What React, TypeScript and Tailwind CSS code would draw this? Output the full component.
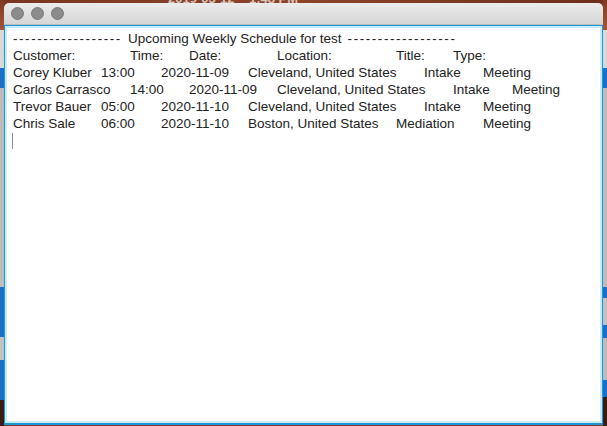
import React from "react";

type Cell = [string, number];

const rows: Cell[][] = [
  [["Customer:", 117], ["Time:", 59], ["Date:", 88], ["Location:", 119], ["Title:", 57], ["Type:", 0]],
  [["Corey Kluber", 88], ["13:00", 60], ["2020-11-09", 87], ["Cleveland, United States", 176], ["Intake", 59], ["Meeting", 0]],
  [["Carlos Carrasco", 117], ["14:00", 59], ["2020-11-09", 88], ["Cleveland, United States", 176], ["Intake", 59], ["Meeting", 0]],
  [["Trevor Bauer", 88], ["05:00", 60], ["2020-11-10", 87], ["Cleveland, United States", 176], ["Intake", 59], ["Meeting", 0]],
  [["Chris Sale", 88], ["06:00", 60], ["2020-11-10", 87], ["Boston, United States", 148], ["Mediation", 87], ["Meeting", 0]],
];

const dashes = "------------------";

function Line({ cells }: { cells: Cell[] }) {
  return (
    <div className="flex whitespace-pre">
      {cells.map(([text, w], i) => (
        <span
          key={i}
          className="shrink-0"
          style={w ? { width: w } : undefined}
        >
          {text}
        </span>
      ))}
    </div>
  );
}

function SideStrip({ right }: { right?: boolean }) {
  return (
    <div className="flex flex-col w-[4px] shrink-0 h-full">
      <div className="h-[30px] bg-gradient-to-b from-[#7e3a22] to-[#a5563a]" />
      <div className="h-[38px] bg-[#d8d8d8]" />
      <div className="h-[20px] bg-[#1a6fc9]" />
      <div className="h-[199px] bg-[#bdbdbd]" />
      <div className={right ? "h-[11px] bg-[#1a6fc9]" : "h-[50px] bg-[#1a6fc9]"} />
      <div className={right ? "h-[27px] bg-[#c2c2c2]" : "h-[23px] bg-[#c2c2c2]"} />
      <div className={right ? "h-[13px] bg-[#1a6fc9]" : "h-[0px]"} />
      <div className={right ? "h-[42px] bg-[#bcbcbc]" : "h-[0px]"} />
      <div className={right ? "h-[17px] bg-[#1a6fc9]" : "h-[40px] bg-[#1a6fc9]"} />
      <div className="flex-1 bg-[#3b1c12]" />
    </div>
  );
}

export default function App() {
  return (
    <div className="w-[607px] h-[426px] overflow-hidden flex bg-[#7a3620] font-['Liberation_Sans',Arial,sans-serif]">
      <SideStrip />

      <div className="w-[599px] shrink-0 flex flex-col">
        {/* desktop menu bar peeking above the window */}
        <div className="h-[3px] overflow-hidden bg-gradient-to-r from-[#7a3620] via-[#8c4429] to-[#6e2f1b] relative">
          <span className="absolute left-[164px] top-[-11px] text-[13px] font-bold text-[#d9c2b8] whitespace-pre">
            2019-03-12    1:48 PM
          </span>
        </div>

        {/* window */}
        <div className="flex-1 flex flex-col rounded-t-[5px] overflow-hidden mb-[1px]">
          {/* title bar */}
          <div className="h-[22px] shrink-0 flex items-center gap-[7px] pl-[7px] bg-gradient-to-b from-[#ececec] to-[#d6d6d6] border-b border-[#bdbdbd]">
            <span className="w-[13px] h-[13px] rounded-full bg-[#8b8b8b] border border-[#7a7a7a]" />
            <span className="w-[13px] h-[13px] rounded-full bg-[#8b8b8b] border border-[#7a7a7a]" />
            <span className="w-[13px] h-[13px] rounded-full bg-[#8b8b8b] border border-[#7a7a7a]" />
          </div>

          {/* text area with focus ring */}
          <div className="flex-1 border border-[#1d97dc] border-b-2 flex">
            <div className="flex-1 border-2 border-[#c9ecfb] bg-white pl-[6px] pt-[2px] text-[13.5px] leading-[17px] text-[#222]">
              <div className="flex whitespace-pre">
                <span className="w-[115px] shrink-0 tracking-[1.55px] overflow-hidden">
                  {dashes}
                </span>
                <span>Upcoming Weekly Schedule for test</span>
                <span className="ml-[6px] tracking-[1.55px]">{dashes}</span>
              </div>
              {rows.map((cells, i) => (
                <Line key={i} cells={cells} />
              ))}
              <div className="w-[1px] h-[16px] mt-[0.5px] -ml-[1px] bg-[#8c8c8c]" />
            </div>
          </div>
        </div>
      </div>

      <SideStrip right />
    </div>
  );
}
